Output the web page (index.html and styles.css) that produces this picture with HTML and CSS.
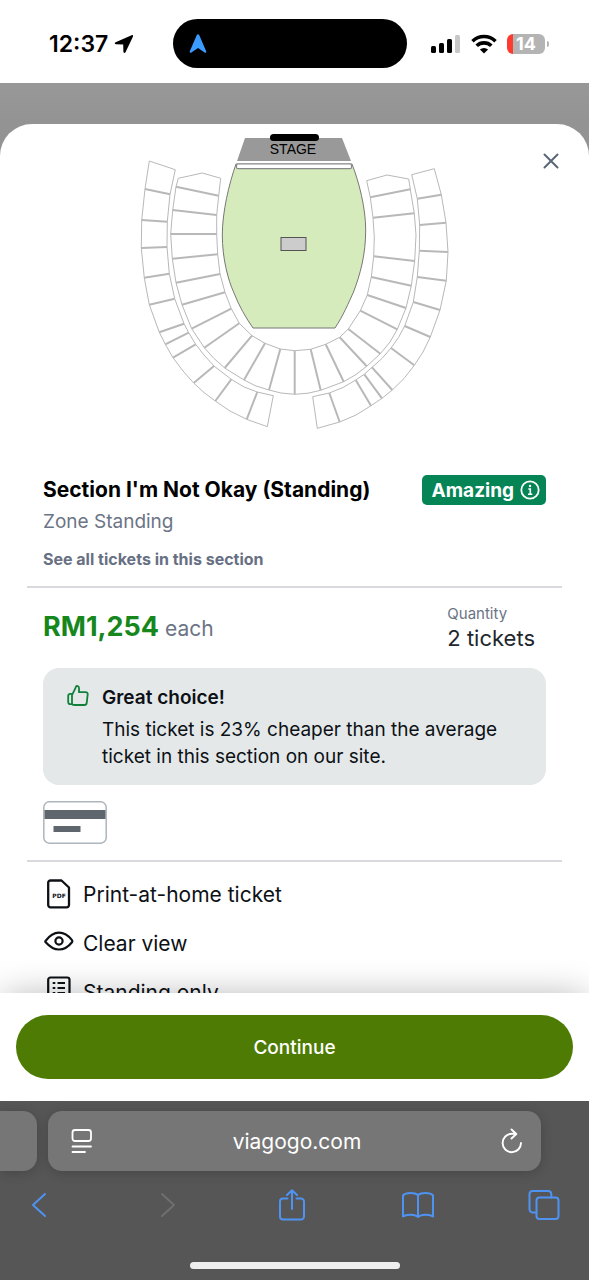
FILE: index.html
```
<!DOCTYPE html>
<html lang="en">
<head>
<meta charset="utf-8">
<meta name="viewport" content="width=device-width, initial-scale=1">
<title>viagogo.com</title>
<link rel="stylesheet" href="styles.css">
</head>
<body>
<div class="phone">
  <header class="status">
    <div class="status-time">
      <span>12:37</span>
      <svg width="20" height="20" viewBox="0 0 20 20" aria-hidden="true"><path d="M17.600 1.200 1.600 8.200c-1.200.6-.9 2 .4 2l7.200.3.2 7.300c0 1.300 1.500 1.600 2.100.4L19 2.600c.4-1-.4-1.800-1.400-1.400Z" fill="#000"/></svg>
    </div>
    <div class="island">
      <svg width="18" height="20" viewBox="0 0 18 20" aria-hidden="true"><path d="M7.700 1.200 .8 17.300c-.5 1.200.6 1.900 1.600 1.300L9 14l6.600 4.600c1 .6 2.100-.1 1.600-1.300L10.300 1.200c-.6-1.200-2-1.200-2.600 0Z" fill="#3b9cff"/></svg>
    </div>
    <div class="status-icons">
      <svg width="30" height="20" viewBox="0 0 30 20" aria-hidden="true"><rect x="0" y="12" width="5" height="7" rx="1.500"/><rect x="8" y="9" width="5" height="10" rx="1.500"/><rect x="16" y="5" width="5" height="14" rx="1.500"/><rect x="24" y="1" width="5" height="18" rx="1.500" fill="#c8c8c8"/></svg>
      <svg width="26" height="20" viewBox="0 0 26 20" aria-hidden="true"><g fill="none" stroke="#000" stroke-width="3.600"><path d="M1.500 7.200a16.500 16.500 0 0 1 23 0"/><path d="M5.700 11.800a10.500 10.500 0 0 1 14.600 0"/></g><path d="M8.900 15.600a6 6 0 0 1 8.200 0L13 19.600Z"/></svg>
      <div class="battery"><span>14</span></div>
    </div>
  </header>

  <main class="stage-area">
    <section class="sheet">
      <button class="close" type="button" aria-label="Close">
        <svg width="16" height="16" viewBox="0 0 16 16" aria-hidden="true"><path d="M1.500 1.500l13 13M14.500 1.500l-13 13" stroke="#5b6676" stroke-width="2" stroke-linecap="round"/></svg>
      </button>
      <div class="scroll">
        <svg class="map" viewBox="130 130 330 305" role="img" aria-label="Seating map">
          <path d="M245 138H342L351 161H237Z" fill="#999"/>
          <rect x="270" y="134" width="49" height="7" rx="3.500"/>
          <text x="293" y="154" text-anchor="middle" class="map-label">STAGE</text>
          <path d="M236 164C229 184 222.300 212 222.300 235C222.300 258 228 280 234 293C239 306 246 318 253 328H335C343 316 349 302 353.500 292C360 275 365.700 255 365.700 230C365.700 208 359 182 352 164Z" fill="#d5ebbb" stroke="#777" stroke-width="1"/>
          <rect x="236.500" y="164" width="115" height="4.700" rx="1.500" fill="#fff" stroke="#8a8a8a" stroke-width="1.200"/>
          <rect x="281" y="237.500" width="25" height="13" fill="#ccc" stroke="#555"/>
          <g fill="none" stroke="#b8b8b8" stroke-linejoin="round">
            <path d="M149.300 161 145 189 141.700 220 141.300 248 144.300 278 149.300 304.700 159.300 332.300 165.300 344.300 173 357.700 183 371 193.700 383 204 392.500 215.300 401 230 411 246.700 419.300 267.300 426.700 273.300 395.700 257.300 392 244 387 231.300 379.300 214 366 204 355 195.700 344.300 188.700 332.700 184 323.700 174.700 298.700 169.300 273.700 167 247 167.300 221.700 170 194.300 175.300 169.700Z"/>
            <path d="M178.300 178.300 176 186.700 172.700 210 170.700 234 172.300 258.700 176 282.700 182 304.700 191.700 328.700 204.300 347.700 214 358.500 224.700 368 244 380 256 386 269 390 281 393 294.700 394.300 308 393.200 320.700 390.300 343.700 381.700 356 374.500 366.700 366.300 380.300 353.700 390 342 397.300 329.300 406 308 411.300 285.700 414.700 261 416 235 414.300 213.300 410.300 189.300 408.700 179 387 175 366.700 180.700 370.300 197.300 373 217.700 374.300 237 373.700 256.300 371.300 277 367.300 295 360.300 310.700 348.300 329 339.700 337.300 325.700 344.300 310.700 349.300 294.700 350.700 280.300 349 265 343.300 252 335.700 239.300 323.300 231.300 308.700 225 292.300 220 274 217.700 254.300 216.700 234 216.700 215 218.700 195.700 220.700 178.300 202.300 173Z"/>
            <path d="M434.300 168.700 441.300 194.700 446 222.700 448 252 446.300 280.700 440 310 430.300 337 423 352 414.300 365.300 404 378.500 392.300 390 382 398.300 371 405.700 356 415 339.700 422 317.300 428.300 312.700 396.700 329.300 393 343 387.500 355.700 380 364.300 374.300 372 367.300 382 358.500 391 348 398.500 337.500 404.700 326 413.300 302 417.300 277 419.300 250.700 419.700 225 417.300 198.700 411.700 174.700Z"/>
            <path stroke-width="2" d="M145 189 170 194.300M141.700 220 167.300 221.700M141.300 248 167 247M144.300 277.700 169.300 273.700M149.300 304.700 174.700 298.700M159.300 332.300 184 323.700M165.300 344.300 188.700 332.700M173 357.700 195.700 344.300M193.700 383 214 366M215.300 401 231.300 379.300M246.700 419.300 257.300 392M176 186.700 218.700 195.700M172.700 210 216.700 215M170.700 234H216.700M172.300 258.700 217.700 254.300M176 282.700 220 274M182 304.700 225 292.300M191.700 328.700 231.300 308.700M204.300 347.700 239.300 323.300M224.700 368 252 335.700M244 380 265 343.300M269 390 280.300 349M294.700 394.300V350.700M320.700 390.300 310.700 349.300M343.700 381.700 325.700 344.300M366.700 366.300 339.700 337.300M380.300 353.700 348.300 329M397.300 329.300 360.300 310.700M406 308 367.300 295M411.300 285.700 371.300 277M414.700 261 373.700 256.300M414.300 213.300 373 217.700M410.300 189.300 370.300 197.300M441.300 194.700 417.300 198.700M446 222.700 419.700 225M448 252 419.300 250.700M446.300 280.700 417.300 277M440 310 413.300 302M430.300 337 404.700 326M414.300 365.300 391 348M392.300 390 372 367.300M382 398.300 364.300 374.300M371 405.700 355.700 380M339.700 422 329.300 393"/>
          </g>
        </svg>

        <div class="block heading">
          <div class="heading-row">
            <h1>Section I'm Not Okay (Standing)</h1>
            <button class="badge" type="button">Amazing
              <svg width="20" height="20" viewBox="0 0 20 20" aria-hidden="true"><circle cx="10" cy="10" r="8.700" fill="none" stroke="#fff" stroke-width="1.800"/><circle cx="10" cy="6" r="1.200" fill="#fff"/><path d="M8.300 9H10.300V14M8 14.200H12.300" fill="none" stroke="#fff" stroke-width="1.600"/></svg>
            </button>
          </div>
          <p class="zone">Zone Standing</p>
          <a class="all" href="#">See all tickets in this section</a>
        </div>

        <div class="block offer">
          <div class="price-row">
            <p class="price"><strong>RM1,254</strong> each</p>
            <p class="quantity"><span>Quantity</span>2 tickets</p>
          </div>
          <div class="note">
            <svg width="24" height="24" viewBox="0 0 24 24" fill="none" stroke="#10803a" stroke-width="1.800" stroke-linejoin="round" aria-hidden="true"><path d="M6 11.200 9.200 4.700 9.900 2.800C10.500 1.500 13 1.800 13 4V8.200H19.600c1.500 0 2.300.9 2.100 2.200l-1 8.600c-.2 1.400-1 2-2.300 2H9c-1.500 0-3-.4-3-1.600Z"/><path d="M6 9.800H4.400C2.800 9.800 2.200 10.600 2.200 12v6c0 1.500.7 2.200 2.100 2.200H6"/></svg>
            <div class="note-text">
              <h2>Great choice!</h2>
              <p>This ticket is 23% cheaper than the average ticket in this section on our site.</p>
            </div>
          </div>
          <svg class="card" width="64" height="43" viewBox="0 0 64 43" role="img" aria-label="Card payment"><rect x=".8" y=".8" width="62.400" height="41.400" rx="5.500" fill="#fff" stroke="#adb5bd" stroke-width="1.500"/><path d="M1.500 9H62.500V18H1.500ZM10.500 25H37.500V31H10.500Z" fill="#5f666d"/></svg>
        </div>

        <ul class="features">
          <li>
            <svg width="32" height="32" viewBox="0 0 32 32" aria-hidden="true"><path d="M7.500 2.500H18.500L26 9.500V27a2.300 2.300 0 0 1-2.300 2.300H7.500A2.300 2.300 0 0 1 5.200 27V4.800A2.300 2.300 0 0 1 7.500 2.500Z" fill="none" stroke="#0d1116" stroke-width="2.300" stroke-linejoin="round"/><text x="16" y="20" text-anchor="middle" class="pdf">PDF</text></svg>
            <span>Print-at-home ticket</span>
          </li>
          <li>
            <svg width="32" height="32" viewBox="0 0 32 32" fill="none" stroke="#0d1116" stroke-width="2.200" aria-hidden="true"><path d="M2.500 14C7 8 11.500 5.700 16 5.700S25 8 29 13.200q.8 1 0 2C25 20.200 20.500 22.500 16 22.500S7 20.200 2.500 15Q2 14.500 2.500 14Z"/><circle cx="16" cy="14" r="3.600"/></svg>
            <span>Clear view</span>
          </li>
          <li>
            <svg width="32" height="32" viewBox="0 0 32 32" fill="none" stroke="#0d1116" stroke-width="2.200" aria-hidden="true"><rect x="5.200" y="1.500" width="21.300" height="28" rx="2.300"/><path d="M9.700 7H12.300M14.500 7H22M9.700 12H12.300M14.500 12H22M9.700 17H12.300M14.500 17H22M9.700 22H12.300M14.500 22H22"/></svg>
            <span>Standing only</span>
          </li>
        </ul>
      </div>
      <div class="actions"><button class="continue" type="button">Continue</button></div>
    </section>
  </main>

  <footer class="browser">
    <div class="tabs">
      <div class="tab-edge"></div>
      <div class="address">
        <button type="button" aria-label="Page menu"><svg width="22" height="26" viewBox="0 0 22 26" fill="none" stroke="#fff" stroke-width="1.800" stroke-linecap="round" aria-hidden="true"><rect x="1.500" y="2" width="18.500" height="11" rx="2.500"/><path d="M1.500 18.500H20M1.500 24H14"/></svg></button>
        <span>viagogo.com</span>
        <button type="button" aria-label="Reload"><svg width="22" height="26" viewBox="0 0 22 26" fill="none" stroke="#fff" stroke-width="1.900" stroke-linecap="round" stroke-linejoin="round" aria-hidden="true"><path d="M20 15a9.200 9.200 0 1 1-9.200-9.200H15M10.500 1.500 15.300 6 10.500 10.500"/></svg></button>
      </div>
    </div>
    <nav class="toolbar" aria-label="Browser">
      <button type="button" aria-label="Back"><svg width="32" height="32" viewBox="0 0 32 32"><path d="M22 5 10 16 22 27"/></svg></button>
      <button type="button" aria-label="Forward" disabled><svg width="32" height="32" viewBox="0 0 32 32"><path d="M13 5 25 16 13 27"/></svg></button>
      <button type="button" aria-label="Share"><svg width="32" height="32" viewBox="0 0 32 32"><path d="M11.500 9.500H7A3 3 0 0 0 4 12.500V27.500A3 3 0 0 0 7 30.500H25A3 3 0 0 0 28 27.500V12.500A3 3 0 0 0 25 9.500H20.500M16 20V1.500M11 6 16 1.200 21 6"/></svg></button>
      <button type="button" aria-label="Bookmarks"><svg width="32" height="32" viewBox="0 0 32 32"><path d="M16 6V28M16 6C13 3.500 4 3 1 6.500V27.500C4 25 13 25 16 28 19 25 28 25 31 27.500V6.500C28 3 19 3.500 16 6Z"/></svg></button>
      <button type="button" aria-label="Tabs"><svg width="32" height="32" viewBox="0 0 32 32"><rect x="8.500" y="8.500" width="22" height="21.500" rx="3"/><path d="M8.500 23.500H5A3.200 3.200 0 0 1 1.500 20.500V5A3.200 3.200 0 0 1 4.700 2H20A3.200 3.200 0 0 1 23.300 5V8.500"/></svg></button>
    </nav>
    <div class="home"></div>
  </footer>
</div>
</body>
</html>
```
FILE: styles.css
```
* { box-sizing: border-box; }

body {
  margin: 0;
  background: #fff;
  color: #0d1116;
  font-family: Inter, "Liberation Sans", sans-serif;
}

h1, h2, p, ul { margin: 0; padding: 0; }
button { border: 0; padding: 0; background: none; font: inherit; color: inherit; }
svg { display: block; flex: none; }

.phone { display: flex; flex-direction: column; height: 100vh; }

.status {
  display: grid;
  grid-template-columns: 173fr 234px 182fr;
  align-items: center;
  height: 83px;
  padding-top: 4px;
  flex: none;
}
.status-time {
  display: flex;
  align-items: center;
  gap: 6px;
  padding-left: 49px;
  font-size: 23px;
  font-weight: 600;
  color: #000;
}
.island {
  display: flex;
  align-items: center;
  height: 49px;
  padding-left: 16px;
  border-radius: 25px;
  background: #000;
}
.status-icons { display: flex; align-items: center; gap: 10px; padding-left: 24px; }
.battery {
  position: relative;
  width: 38px;
  height: 20px;
  border-radius: 6px;
  background: linear-gradient(90deg, #ff3b30 6px, #b4b4b4 6px);
  color: #fff;
  font-size: 18px;
  font-weight: 700;
  line-height: 20px;
  text-align: center;
}
.battery::after {
  content: "";
  position: absolute;
  top: 7px;
  right: -4px;
  width: 2px;
  height: 6px;
  border-radius: 0 2px 2px 0;
  background: #b4b4b4;
}

.stage-area {
  display: flex;
  flex: 1;
  min-height: 0;
  padding-top: 41px;
  background: linear-gradient(#989898, #929392 41px);
}
.sheet {
  position: relative;
  display: flex;
  flex: 1;
  flex-direction: column;
  min-width: 0;
  overflow: hidden;
  border-radius: 32px 32px 0 0;
  background: #fff;
}
.close { position: absolute; top: 29px; right: 30px; }
.scroll { flex: 1; min-height: 0; overflow: hidden; padding: 6px 27px 0; }

.map { width: 330px; margin: 0 auto; }
.map-label { font-family: "Liberation Sans", sans-serif; font-size: 14px; }

.block { padding: 0 16px; border-bottom: 2px solid #d8dadd; }

.heading { padding-top: 40px; padding-bottom: 16px; }
.heading-row { display: flex; align-items: center; justify-content: space-between; height: 30px; }
h1 { color: #000; font-size: 21px; line-height: 30px; font-weight: 700; }
.badge {
  display: flex;
  align-items: center;
  gap: 6px;
  height: 30px;
  padding: 0 6px 0 10px;
  border-radius: 5px;
  background: #058556;
  color: #fff;
  font-size: 19px;
  font-weight: 700;
}
.zone { color: #6b7485; font-size: 19px; line-height: 24px; margin-top: 5px; }
.all {
  display: block;
  margin-top: 14px;
  color: #677083;
  font-size: 16px;
  line-height: 22px;
  font-weight: 700;
  text-decoration: none;
}

.offer { padding-top: 16px; padding-bottom: 16px; }
.price-row { display: flex; justify-content: space-between; }
.price { padding-top: 5px; color: #6b7485; font-size: 21px; line-height: 36px; }
.price strong { color: #16871c; font-size: 27px; font-weight: 700; }
.quantity { padding-right: 11px; color: #22272e; font-size: 22px; line-height: 28px; }
.quantity span { display: block; color: #6b7485; font-size: 15px; line-height: 20px; }
.note {
  display: flex;
  gap: 12px;
  margin-top: 16px;
  padding: 16px 23px 15px;
  border-radius: 16px;
  background: #e4e8e9;
}
.note h2 { font-size: 19px; line-height: 27px; font-weight: 600; }
.note p { margin-top: 5px; font-size: 19px; line-height: 27px; }
.card { margin-top: 16px; }

.features { padding: 16px 16px 0; list-style: none; }
.features li {
  display: flex;
  gap: 8px;
  height: 49px;
  font-size: 21px;
  line-height: 34px;
}
.pdf { font-family: "DejaVu Sans", sans-serif; font-size: 6px; font-weight: 700; fill: #0d1116; }

.actions {
  position: relative;
  padding: 22px 16px;
  background: #fff;
  box-shadow: 0 0 36px -4px rgba(0, 0, 0, .32);
}
.continue {
  width: 100%;
  height: 64px;
  border-radius: 32px;
  background: #4e7b03;
  color: #fff;
  font-size: 19px;
  font-weight: 500;
}

.browser {
  position: relative;
  flex: none;
  padding: 10px 0 11px;
  overflow: hidden;
  background: #565656;
}
.tabs { display: flex; gap: 11px; padding-right: 48px; }
.tab-edge, .address { height: 60px; background: #767676; box-shadow: 0 2px 12px rgba(0, 0, 0, .18); }
.tab-edge { width: 37px; border-radius: 0 14px 14px 0; }
.address {
  display: flex;
  flex: 1;
  align-items: center;
  justify-content: space-between;
  padding: 0 18px 0 23px;
  border-radius: 14px;
  color: #fff;
  font-size: 21px;
}
.toolbar { display: flex; justify-content: space-between; padding: 18px 29px 0 23px; }
.toolbar svg { fill: none; stroke: #4f93f2; stroke-width: 2; stroke-linecap: round; stroke-linejoin: round; }
.toolbar button:disabled svg { stroke: #6f6f6f; }
.home { width: 210px; height: 7px; margin: 41px auto 0; border-radius: 4px; background: #f0eff0; }
```
